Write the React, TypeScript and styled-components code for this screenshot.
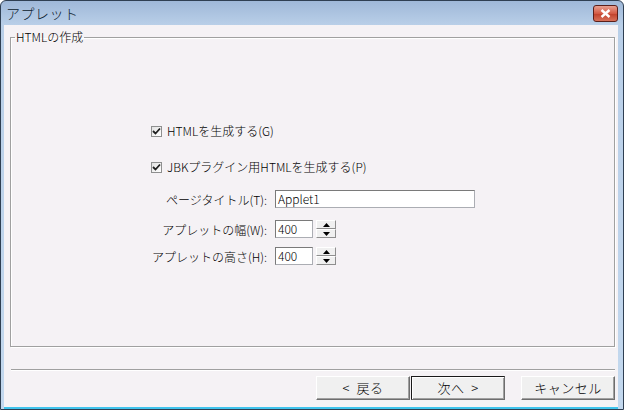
import React from "react"
import styled, { createGlobalStyle } from "styled-components"

const GlobalStyle = createGlobalStyle`
  html, body {
    margin: 0;
    padding: 0;
    background: #ffffff;
  }
  body {
    font-family: "MS UI Gothic", "Noto Sans CJK JP", "DejaVu Sans", sans-serif;
    font-size: 12px;
    font-weight: 300;
    line-height: 14px;
    color: #000;
  }
`

const Window = styled.div`
  width: 624px;
  height: 410px;
  box-sizing: border-box;
  border: 1px solid #2f3f52;
  border-radius: 6px 6px 0 0;
  background: linear-gradient(#9fb8d8 0px, #b9cfe8 24px, #c3d8ee 100%);
  display: flex;
  flex-direction: column;
  overflow: hidden;
`

const TitleBar = styled.div`
  height: 24px;
  flex: none;
  display: flex;
  align-items: center;
  justify-content: space-between;
  padding: 0 5px 0 5px;
`

const Title = styled.span`
  font-size: 14px;
  color: #0b1a2c;
  letter-spacing: 0.5px;
`

const CloseButton = styled.div`
  width: 25px;
  height: 17px;
  box-sizing: border-box;
  border: 1px solid #5b1f1a;
  border-radius: 3px;
  background: linear-gradient(#e8a090 0%, #d45a44 50%, #c0402a 51%, #d8715a 100%);
  display: flex;
  align-items: center;
  justify-content: center;
  margin-top: 1px;
`

const Body = styled.div`
  flex: 1;
  margin: 0 5px 0 3px;
  background: #f5f2f5;
  border-bottom: 2px solid #3fc3ec;
  display: flex;
  flex-direction: column;
  padding: 5px 3px 0 6px;
`

const Group = styled.fieldset`
  margin: 0;
  height: 317px;
  flex: none;
  box-sizing: border-box;
  border: 1px solid #a0a0a0;
  box-shadow: inset 1px 1px 0 #ffffff, 1px 1px 0 #ffffff;
  padding: 80px 0 0 0;
  min-width: 0;
`

const Legend = styled.legend`
  padding: 0 1px;
  margin-left: 4px;
  font-size: 12px;
  line-height: 14px;
`

const Form = styled.div`
  display: grid;
  grid-template-columns: 127px 200px;
  column-gap: 8px;
  margin-left: 129px;
`

const CheckRow = styled.label<{ $gap: number }>`
  grid-column: 1 / span 2;
  display: flex;
  align-items: center;
  gap: 5px;
  margin-left: 11px;
  height: 14px;
  margin-bottom: ${(p) => p.$gap}px;
`

const Box = styled.span`
  width: 11px;
  height: 11px;
  box-sizing: border-box;
  border: 1px solid #8e8f8f;
  background: linear-gradient(135deg, #e2e2e2, #ffffff);
  display: flex;
  align-items: center;
  justify-content: center;
`

const Label = styled.span<{ $h: number }>`
  text-align: right;
  height: ${(p) => p.$h}px;
  line-height: 19px;
  white-space: nowrap;
`

const FieldRow = styled.div<{ $h: number }>`
  display: flex;
  gap: 3px;
  height: ${(p) => p.$h}px;
  align-items: flex-start;
`

const TextInput = styled.div<{ $w: number }>`
  width: ${(p) => p.$w}px;
  height: 18px;
  box-sizing: border-box;
  border: 1px solid #abadb3;
  border-top-color: #7a7a7a;
  border-left-color: #7a7a7a;
  background: #ffffff;
  padding: 1px 2px;
  font-size: 12px;
  line-height: 14px;
  font-family: "Noto Sans CJK JP", "DejaVu Sans", sans-serif;
`

const Spin = styled.div`
  display: flex;
  flex-direction: column;
  width: 20px;
  height: 18px;
`

const SpinButton = styled.div`
  flex: 1;
  box-sizing: border-box;
  background: #f0f0f0;
  border: 1px solid #ffffff;
  border-right-color: #8e8e8e;
  border-bottom-color: #8e8e8e;
  display: flex;
  align-items: center;
  justify-content: center;
`

const Separator = styled.div`
  height: 0;
  flex: none;
  border-top: 1px solid #a0a0a0;
  border-bottom: 1px solid #ffffff;
  margin: 22px 0 0 1px;
`

const ButtonBar = styled.div`
  display: flex;
  justify-content: flex-end;
  margin-top: 5px;
`

const Button = styled.div<{ $default?: boolean; $gap?: number }>`
  width: 94px;
  height: 24px;
  box-sizing: border-box;
  background: #f0f0f0;
  border: 1px solid ${(p) => (p.$default ? "#1a1a1a" : "#ffffff")};
  border-right-color: #6e6e6e;
  border-bottom-color: #6e6e6e;
  box-shadow: ${(p) =>
    p.$default
      ? "inset 1px 1px 0 #ffffff, inset -1px -1px 0 #a0a0a0"
      : "inset -1px -1px 0 #a0a0a0"};
  margin-left: ${(p) => p.$gap ?? 0}px;
  display: flex;
  align-items: center;
  justify-content: center;
  font-size: 13px;
  letter-spacing: 0.5px;
  white-space: pre;
`

const Check = () => (
  <svg width="9" height="9" viewBox="0 0 9 9">
    <path d="M1 4 L3.5 6.5 L8 1.5" fill="none" stroke="#1f1f1f" strokeWidth="1.8" />
  </svg>
)

const Tri = ({ up }: { up?: boolean }) => (
  <svg width="7" height="4" viewBox="0 0 7 4">
    <path d={up ? "M0 4 L3.5 0 L7 4 Z" : "M0 0 L3.5 4 L7 0 Z"} fill="#000" />
  </svg>
)

const NumberField = ({ value, h }: { value: string; h: number }) => (
  <FieldRow $h={h}>
    <TextInput $w={38}>{value}</TextInput>
    <Spin>
      <SpinButton>
        <Tri up />
      </SpinButton>
      <SpinButton>
        <Tri />
      </SpinButton>
    </Spin>
  </FieldRow>
)

export default function App() {
  return (
    <>
      <GlobalStyle />
      <Window>
        <TitleBar>
          <Title>アプレット</Title>
          <CloseButton>
            <svg width="11" height="9" viewBox="0 0 11 9">
              <path d="M1.5 1 L9.5 8 M9.5 1 L1.5 8" stroke="#fff" strokeWidth="2.4" />
            </svg>
          </CloseButton>
        </TitleBar>
        <Body>
          <Group>
            <Legend>HTMLの作成</Legend>
            <Form>
              <CheckRow $gap={22}>
                <Box>
                  <Check />
                </Box>
                HTMLを生成する(G)
              </CheckRow>
              <CheckRow $gap={16}>
                <Box>
                  <Check />
                </Box>
                JBKプラグイン用HTMLを生成する(P)
              </CheckRow>
              <Label $h={30}>ページタイトル(T):</Label>
              <FieldRow $h={30}>
                <TextInput $w={200}>Applet1</TextInput>
              </FieldRow>
              <Label $h={27}>アプレットの幅(W):</Label>
              <NumberField value="400" h={27} />
              <Label $h={27}>アプレットの高さ(H):</Label>
              <NumberField value="400" h={27} />
            </Form>
          </Group>
          <Separator />
          <ButtonBar>
            <Button>{"<  戻る"}</Button>
            <Button $default $gap={1}>
              {"次へ  >"}
            </Button>
            <Button $gap={16}>キャンセル</Button>
          </ButtonBar>
        </Body>
      </Window>
    </>
  )
}
